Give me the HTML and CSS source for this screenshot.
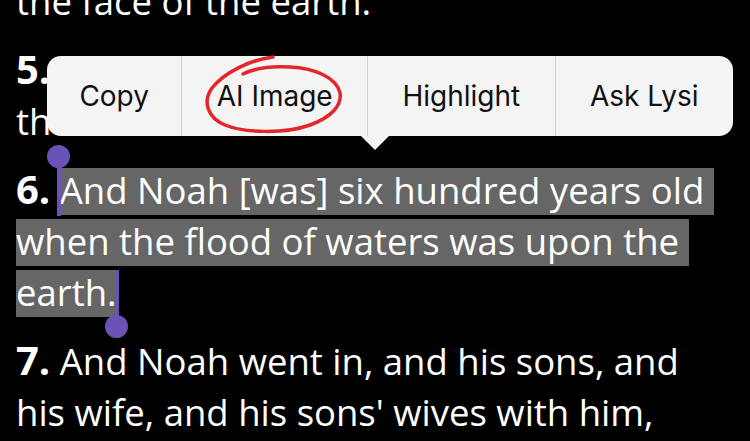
FILE: index.html
```html
<!DOCTYPE html>
<html lang="en">
<head>
    <meta charset="UTF-8">
    <meta name="viewport" content="width=device-width, initial-scale=1.0">
    <title>Genesis 7 - Reader</title>
    <link rel="stylesheet" href="styles.css">
</head>
<body>

    <main class="reader">
        <p class="verse">the face of the earth.</p>
        <p class="verse"><b class="num">5.</b> And Noah did according unto all that the LORD commanded him.</p>
        <p class="verse"><b class="num">6.</b> <span class="sel">And Noah [was] six hundred years old&nbsp;<i class="handle handle-start"></i></span> <span class="sel">when the flood of waters was upon the&nbsp;</span> <span class="sel">earth.<i class="handle handle-end"></i></span></p>
        <p class="verse"><b class="num">7.</b> And Noah went in, and his sons, and his wife, and his sons' wives with him, into&nbsp;the&nbsp;ark, because of the waters of the flood.</p>
    </main>

    <!-- selection menu -->
    <div class="menu">
        <button class="menu-item">Copy</button>
        <button class="menu-item menu-item-marked">
            AI Image
            <svg class="scribble" viewBox="0 0 185 80" width="185" height="80">
                <path d="M91 1 C 68 4, 43 16, 30 32 C 20 46, 26 62, 43 69 C 63 77, 103 78, 128 69 C 150 61, 160 49, 158 37 C 155 22, 133 12, 108 11 C 90 10, 73 12, 61 18" />
            </svg>
        </button>
        <button class="menu-item">Highlight</button>
        <button class="menu-item">Ask Lysi</button>
    </div>

</body>
</html>
```

FILE: styles.css
```css
* {
    margin: 0;
    padding: 0;
    box-sizing: border-box;
}

body {
    background-color: #000;
    color: #fff;
    font-family: "Open Sans", "Noto Sans", sans-serif;
    overflow: hidden;
    height: 100vh;
}

.reader {
    padding: 0 16px;
    margin-top: -24px;
}

.verse {
    font-size: 36.5px;
    line-height: 51px;
    margin-bottom: 18px;
}

.num {
    font-size: 40px;
    font-weight: 700;
    line-height: 1;
}

/* selected text, one rect per line */
.sel {
    position: relative;
    background: linear-gradient(#666, #666) 0 2.5px / 100% 47px no-repeat;
}

.handle {
    position: absolute;
    width: 4px;
    background-color: #6a52b6;
}

.handle::before {
    content: "";
    position: absolute;
    left: -9.5px;
    width: 23px;
    height: 23px;
    border-radius: 50%;
    background-color: #6a52b6;
}

.handle-start {
    left: -3px;
    top: -8.5px;
    bottom: -0.5px;
}

.handle-start::before {
    top: -11.5px;
}

.handle-end {
    right: -2px;
    top: 2.5px;
    bottom: -9.5px;
}

.handle-end::before {
    bottom: -11.5px;
}

.menu {
    position: absolute;
    left: 47px;
    top: 56px;
    width: 686px;
    height: 80px;
    display: flex;
    background-color: #f4f4f4;
    border-radius: 14px;
}

.menu::after {
    content: "";
    position: absolute;
    left: 314px;
    top: 80px;
    border-left: 14px solid transparent;
    border-right: 14px solid transparent;
    border-top: 14px solid #f4f4f4;
}

.menu-item {
    position: relative;
    flex: 1 1 auto;
    border: none;
    background: none;
    font-family: Inter, "Liberation Sans", sans-serif;
    font-size: 28px;
    color: #111;
    border-left: 1px solid #d2d2d2;
    padding: 0 30px;
}

.menu-item:first-child {
    border-left: none;
    padding: 0 28px;
}

.scribble {
    position: absolute;
    left: 0;
    top: 0;
    overflow: visible;
}

.scribble path {
    fill: none;
    stroke: #e3262b;
    stroke-width: 3.5;
    stroke-linecap: round;
}
```
